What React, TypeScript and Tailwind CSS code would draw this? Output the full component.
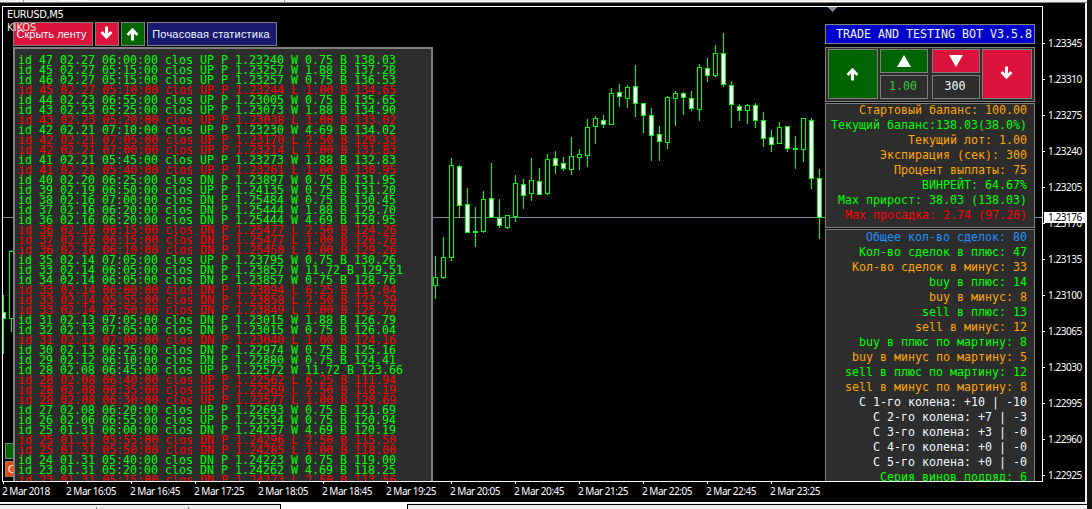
import { clsx } from "clsx";

type Candle = [high: number, top: number, bottom: number, low: number, down?: 1];

// pixel rows of each candle, left to right, one every 8px
const CANDLES: Candle[] = [
    [256, 277, 286, 299],
    [237, 257, 278, 279],
    [158, 165, 258, 261],
    [165, 166, 206, 218, 1],
    [188, 204, 233, 233, 1],
    [207, 231, 233, 247],
    [191, 199, 232, 233],
    [163, 198, 218, 218, 1],
    [199, 218, 226, 228, 1],
    [215, 215, 228, 229],
    [175, 183, 217, 222],
    [179, 184, 196, 209, 1],
    [158, 180, 194, 201],
    [168, 181, 195, 195, 1],
    [154, 159, 194, 195],
    [151, 158, 166, 174, 1],
    [157, 163, 169, 171, 1],
    [137, 156, 170, 175],
    [149, 154, 158, 170],
    [119, 127, 156, 167],
    [116, 118, 127, 144],
    [115, 120, 125, 128, 1],
    [88, 93, 125, 125],
    [84, 92, 97, 107, 1],
    [85, 87, 99, 108],
    [65, 86, 104, 117, 1],
    [103, 103, 116, 133, 1],
    [108, 115, 136, 161, 1],
    [126, 134, 142, 161, 1],
    [96, 97, 143, 149],
    [91, 93, 99, 126],
    [92, 93, 98, 115, 1],
    [91, 98, 109, 111, 1],
    [64, 67, 110, 121],
    [58, 68, 76, 82, 1],
    [45, 53, 76, 77],
    [33, 53, 85, 87, 1],
    [81, 85, 105, 128, 1],
    [104, 106, 111, 121, 1],
    [104, 105, 111, 124],
    [103, 105, 121, 128, 1],
    [112, 120, 139, 147, 1],
    [130, 137, 145, 152, 1],
    [122, 127, 144, 144],
    [126, 126, 149, 152, 1],
    [136, 148, 150, 169],
    [118, 118, 150, 162],
    [118, 120, 179, 189, 1],
    [169, 178, 218, 239, 1],
];

const TRADES = [
    "id 47 02.27 06:00:00 clos UP P 1.23240 W 0.75 B 138.03",
    "id 45 02.27 05:15:00 clos UP P 1.23257 W 1.88 B 137.28",
    "id 46 02.27 05:15:00 clos UP P 1.23257 W 0.75 B 136.53",
    "id 45 02.27 05:10:00 clos UP P 1.23244 L 1.00 B 134.65",
    "id 44 02.23 06:55:00 clos UP P 1.23005 W 0.75 B 135.65",
    "id 43 02.23 05:25:00 clos UP P 1.23073 W 1.88 B 134.90",
    "id 43 02.23 05:20:00 clos UP P 1.23038 L 1.00 B 133.02",
    "id 42 02.21 07:10:00 clos UP P 1.23230 W 4.69 B 134.02",
    "id 42 02.21 07:05:00 clos UP P 1.23170 L 2.50 B 129.33",
    "id 42 02.21 07:00:00 clos UP P 1.23214 L 1.00 B 131.83",
    "id 41 02.21 05:45:00 clos UP P 1.23273 W 1.88 B 132.83",
    "id 41 02.21 05:40:00 clos UP P 1.23261 L 1.00 B 130.95",
    "id 40 02.20 06:25:00 clos DN P 1.23897 W 0.75 B 131.95",
    "id 39 02.19 06:50:00 clos UP P 1.24135 W 0.75 B 131.20",
    "id 38 02.16 07:00:00 clos DN P 1.25484 W 0.75 B 130.45",
    "id 37 02.16 06:20:00 clos DN P 1.25444 W 1.88 B 129.70",
    "id 36 02.16 06:20:00 clos DN P 1.25444 W 4.69 B 128.95",
    "id 36 02.16 06:15:00 clos DN P 1.25477 L 2.50 B 124.26",
    "id 37 02.16 06:15:00 clos DN P 1.25477 L 1.00 B 126.76",
    "id 36 02.16 06:10:00 clos DN P 1.25450 L 1.00 B 129.26",
    "id 35 02.14 07:05:00 clos UP P 1.23795 W 0.75 B 130.26",
    "id 33 02.14 06:05:00 clos DN P 1.23857 W 11.72 B 129.51",
    "id 34 02.14 06:05:00 clos DN P 1.23857 W 0.75 B 128.76",
    "id 33 02.14 06:00:00 clos DN P 1.23894 L 6.25 B 117.04",
    "id 33 02.14 05:55:00 clos DN P 1.23858 L 2.50 B 123.29",
    "id 33 02.14 05:50:00 clos DN P 1.23849 L 1.00 B 125.79",
    "id 31 02.13 07:05:00 clos DN P 1.23015 W 1.88 B 126.79",
    "id 32 02.13 07:05:00 clos DN P 1.23015 W 0.75 B 126.04",
    "id 31 02.13 07:00:00 clos DN P 1.23040 L 1.00 B 124.16",
    "id 30 02.13 06:25:00 clos DN P 1.22974 W 0.75 B 125.16",
    "id 29 02.12 06:10:00 clos DN P 1.22880 W 0.75 B 124.41",
    "id 28 02.08 06:45:00 clos UP P 1.22572 W 11.72 B 123.66",
    "id 28 02.08 06:40:00 clos UP P 1.22562 L 6.25 B 111.94",
    "id 28 02.08 06:35:00 clos UP P 1.22569 L 2.50 B 118.19",
    "id 28 02.08 06:30:00 clos UP P 1.22577 L 1.00 B 120.69",
    "id 27 02.08 06:20:00 clos UP P 1.22693 W 0.75 B 121.69",
    "id 26 02.06 06:55:00 clos UP P 1.23534 W 0.75 B 120.94",
    "id 25 01.31 06:00:00 clos DN P 1.24237 W 4.69 B 120.19",
    "id 25 01.31 05:55:00 clos DN P 1.24296 L 2.50 B 115.50",
    "id 25 01.31 05:50:00 clos DN P 1.24285 L 1.00 B 118.00",
    "id 24 01.31 05:40:00 clos DN P 1.24223 W 0.75 B 119.00",
    "id 23 01.31 05:20:00 clos DN P 1.24262 W 4.69 B 118.25",
    "id 23 01.31 05:15:00 clos DN P 1.24273 L 2.50 B 113.56",
];

const TONES = {
    orange: "text-[#ffa500]",
    lime: "text-[#00ff00]",
    red: "text-[#ff0000]",
    blue: "text-[#1e90ff]",
    white: "text-[#f0f8ff]",
};

type Stat = [text: string, tone: keyof typeof TONES];

const BALANCE: Stat[] = [
    ["Стартовый баланс: 100.00", "orange"],
    ["Текущий баланс:138.03(38.0%)", "lime"],
    ["Текущий лот: 1.00", "orange"],
    ["Экспирация (сек): 300", "orange"],
    ["Процент выплаты: 75", "orange"],
    ["ВИНРЕЙТ: 64.67%", "lime"],
    ["Max прирост: 38.03 (138.03)", "lime"],
    ["Max просадка: 2.74 (97.26)", "red"],
];

const DEALS: Stat[] = [
    ["Общее кол-во сделок: 80", "blue"],
    ["Кол-во сделок в плюс: 47", "lime"],
    ["Кол-во сделок в минус: 33", "orange"],
    ["buy в плюс: 14", "lime"],
    ["buy в минус: 8", "orange"],
    ["sell в плюс: 13", "lime"],
    ["sell в минус: 12", "orange"],
    ["buy в плюс по мартину: 8", "lime"],
    ["buy в минус по мартину: 5", "orange"],
    ["sell в плюс по мартину: 12", "lime"],
    ["sell в минус по мартину: 8", "orange"],
    ["С 1-го колена: +10 | -10", "white"],
    ["С 2-го колена: +7 | -3", "white"],
    ["С 3-го колена: +3 | -0", "white"],
    ["С 4-го колена: +0 | -0", "white"],
    ["С 5-го колена: +0 | -0", "white"],
    ["Серия винов подряд: 6", "lime"],
];

const PRICES = [
    "1.23345", "1.23310", "1.23275", "1.23240", "1.23205", "1.23170", "1.23135",
    "1.23100", "1.23065", "1.23030", "1.22995", "1.22960", "1.22925",
];

const TIMES = [
    "2 Mar 2018", "2 Mar 16:05", "2 Mar 16:45", "2 Mar 17:25", "2 Mar 18:05",
    "2 Mar 18:45", "2 Mar 19:25", "2 Mar 20:05", "2 Mar 20:45", "2 Mar 21:25",
    "2 Mar 22:05", "2 Mar 22:45", "2 Mar 23:25",
];

const MONO = "font-['DejaVu_Sans_Mono','Liberation_Mono',monospace] text-[11.63px] whitespace-pre";
const AXIS = "font-['Noto_Sans','Open_Sans',sans-serif] text-[10px] tracking-[-0.48px] whitespace-nowrap";

function Arrow({ up }: { up?: boolean }) {
    return (
        <svg width="13" height="14" viewBox="0 0 13 14" className={clsx("shrink-0", up && "rotate-180")}>
            <path d="M6.5 0.5V11" stroke="#fff" strokeWidth="3" fill="none" />
            <path d="M1.6 6L6.5 11.3L11.4 6" stroke="#fff" strokeWidth="2.8" fill="none" />
        </svg>
    );
}

function Triangle({ up }: { up?: boolean }) {
    return (
        <svg width="14" height="12" viewBox="0 0 14 12" className={clsx("mr-px", up && "rotate-180")}>
            <path d="M0 0H14L7 12Z" fill="#fff" />
        </svg>
    );
}

function Button({ className, children }: { className: string; children?: React.ReactNode }) {
    return (
        <button className={clsx("flex items-center justify-center border border-[#808080] whitespace-nowrap", className)}>
            {children}
        </button>
    );
}

function CandleChart() {
    return (
        <svg
            className="absolute -top-[7px] -left-[3px]"
            width="1043"
            height="482"
            viewBox="0 0 1043 482"
            shapeRendering="crispEdges"
        >
            <rect x="3" y="217" width="1040" height="1" fill="#778899" />
            <path d="M827 7H838L832.5 12Z" fill="#778899" />
            {/* candles cut off by the trade log */}
            <rect x="3" y="295" width="1" height="59" fill="#00ff00" />
            <rect x="3" y="312" width="3" height="7" fill="#00ff00" />
            <rect x="3" y="313" width="2" height="5" fill="#fff" />
            <rect x="11" y="250" width="1" height="82" fill="#00ff00" />
            <rect x="9.5" y="251.5" width="4" height="67" fill="#000" stroke="#00ff00" />
            {CANDLES.map(([high, top, bottom, low, down], i) => {
                const x = 435 + i * 8;
                return (
                    <g key={i}>
                        <rect x={x} y={high} width="1" height={low - high} fill="#00ff00" />
                        <rect x={x - 2} y={top} width="5" height={bottom - top} fill="#00ff00" />
                        <rect
                            x={x - 1}
                            y={top + 1}
                            width="3"
                            height={bottom - top - 2}
                            fill={down ? "#fff" : "#000"}
                        />
                    </g>
                );
            })}
        </svg>
    );
}

function TradeLog() {
    return (
        <div className="mt-px min-h-0 w-[420px] flex-1 overflow-hidden border-2 border-b-0 border-[#808080] bg-[#2d2d2d] pt-[6px] pl-[3px]">
            {TRADES.map((line, i) => (
                <div
                    key={i}
                    className={clsx(MONO, "h-[10px] leading-[10px]", line.includes(" W ") ? "text-[#00ff00]" : "text-[#ff0000]")}
                >
                    {line}
                </div>
            ))}
        </div>
    );
}

function Stats({ rows }: { rows: Stat[] }) {
    return (
        <>
            {rows.map(([text, tone]) => (
                <div key={text} className={clsx(MONO, "h-[15px] pr-[7px] text-right leading-[15px]", TONES[tone])}>
                    {text}
                </div>
            ))}
        </>
    );
}

function BotPanel() {
    return (
        <div className="flex w-[210px] flex-col pt-[17px]">
            <div className={clsx(MONO, "h-5 shrink-0 border border-[#808080] bg-[#0000cd] pr-[2px] text-right leading-[18px] text-[#f0f8ff]")}>
                TRADE AND TESTING BOT V3.5.8
            </div>
            <div className="mt-[3px] flex h-[55px] shrink-0 border border-[#808080] bg-[#2d2d2d] px-[2px] pt-px">
                <Button className="h-[50px] w-[50px] bg-[#006400] pr-[2px]">
                    <Arrow up />
                </Button>
                <div className="ml-[2px] flex flex-col gap-[2px]">
                    <Button className="h-6 w-12 bg-[#006400]">
                        <Triangle up />
                    </Button>
                    <Button className={clsx(MONO, "h-6 w-12 bg-[#2d2d2d] pr-[2px] text-[#32cd32]")}>1.00</Button>
                </div>
                <div className="ml-1 flex flex-col gap-[2px]">
                    <Button className="h-6 w-12 bg-[#dc143c]">
                        <Triangle />
                    </Button>
                    <Button className={clsx(MONO, "h-6 w-12 bg-[#2d2d2d] pr-[2px] text-[#f0f8ff]")}>300</Button>
                </div>
                <Button className="ml-[2px] h-[50px] w-[50px] bg-[#dc143c] pr-[2px] pb-[2px]">
                    <Arrow />
                </Button>
            </div>
            <div className="mt-px h-[125px] shrink-0 border border-[#808080] bg-[#2d2d2d]">
                <div className="-mt-px">
                    <Stats rows={BALANCE} />
                </div>
            </div>
            <div className="mt-px min-h-0 flex-1 overflow-hidden border border-b-0 border-[#808080] bg-[#2d2d2d]">
                <Stats rows={DEALS} />
            </div>
        </div>
    );
}

function PriceAxis() {
    return (
        <div className="relative w-[42px] pt-[19px] text-white">
            {PRICES.map((price) => (
                <div key={price} className="flex h-9 items-center">
                    <span className="h-px w-[2px] bg-white" />
                    <span className={clsx(AXIS, "ml-[3px]")}>{price}</span>
                </div>
            ))}
            <div className={clsx(AXIS, "absolute top-[206px] left-px h-[11px] w-[41px] bg-white pl-1 leading-[11px] text-black")}>
                1.23176
            </div>
        </div>
    );
}

export default function App() {
    return (
        <div className="flex h-[509px] w-[1092px] overflow-hidden bg-[#12150f]">
            <div className="flex w-[1087px] flex-col">
                <div className="flex h-[3px] shrink-0 border-b border-[#808080] bg-[#f0f0f0]">
                    <div className="ml-[23px] w-px bg-[#909090]" />
                    <div className="ml-[37px] h-px w-[26px] bg-white" />
                    <div className="ml-[197px] w-px bg-[#909090]" />
                </div>
                <div className="flex h-[499px] shrink-0 flex-col border-r-2 border-[#f0f0f0] bg-black pt-[3px] pl-[2px]">
                    <div className="flex h-[476px]">
                        <div className="relative flex w-[1041px] justify-between overflow-hidden border border-white pr-[7px] pl-[10px]">
                            <CandleChart />
                            <div className="absolute top-[436px] left-[2px] h-4 w-5 border border-[#808080] bg-[#006400]" />
                            <div className="absolute top-[454px] left-[2px] h-4 w-5 border border-[#808080] bg-[#ff4500] pl-[2px] font-['Liberation_Sans',sans-serif] text-[11px] leading-[14px] text-white">
                                С
                            </div>
                            <div className="relative flex flex-col pt-[15px]">
                                <div className="flex h-6 shrink-0 gap-[2px] font-['Liberation_Sans',Arial,sans-serif] text-[11px] text-[#f0f8ff]">
                                    <Button className="w-20 bg-[#dc143c] pr-[3px]">Скрыть ленту</Button>
                                    <Button className="w-6 bg-[#dc143c] pr-px pb-[3px]">
                                        <Arrow />
                                    </Button>
                                    <Button className="w-6 bg-[#006400] pr-px">
                                        <Arrow up />
                                    </Button>
                                    <Button className="w-[130px] bg-[#191970] pr-[2px] tracking-[0.2px]">Почасовая статистика</Button>
                                </div>
                                <TradeLog />
                            </div>
                            <div className="relative flex">
                                <BotPanel />
                            </div>
                            <div className="absolute top-[1px] left-1 font-['DejaVu_Sans_Condensed','DejaVu_Sans',sans-serif] text-[11px] leading-[13px] tracking-[-0.35px] text-white">
                                <div>EURUSD,M5</div>
                                <div className="tracking-normal text-[#f5e6dc]">KIKOS</div>
                            </div>
                        </div>
                        <PriceAxis />
                    </div>
                    <div className="flex h-5 text-white">
                        {TIMES.map((time) => (
                            <div key={time} className="w-16 shrink-0">
                                <div className="ml-px h-[2px] w-px bg-white" />
                                <div className={clsx(AXIS, "leading-[14px]")}>{time}</div>
                            </div>
                        ))}
                    </div>
                </div>
                <div className="flex h-[7px] shrink-0 border-t border-white bg-[#f0f0f0]">
                    <div className="mt-px flex w-[281px] border-t border-r border-black bg-[#f0f0f0]">
                        <div className="mt-[2px] ml-[96px] w-px bg-[#808080]" />
                        <div className="mt-[2px] ml-[91px] w-px bg-[#808080]" />
                    </div>
                    <div className="w-[126px] bg-white" />
                    <div className="mt-px flex-1 border-t border-l border-black" />
                </div>
            </div>
        </div>
    );
}
